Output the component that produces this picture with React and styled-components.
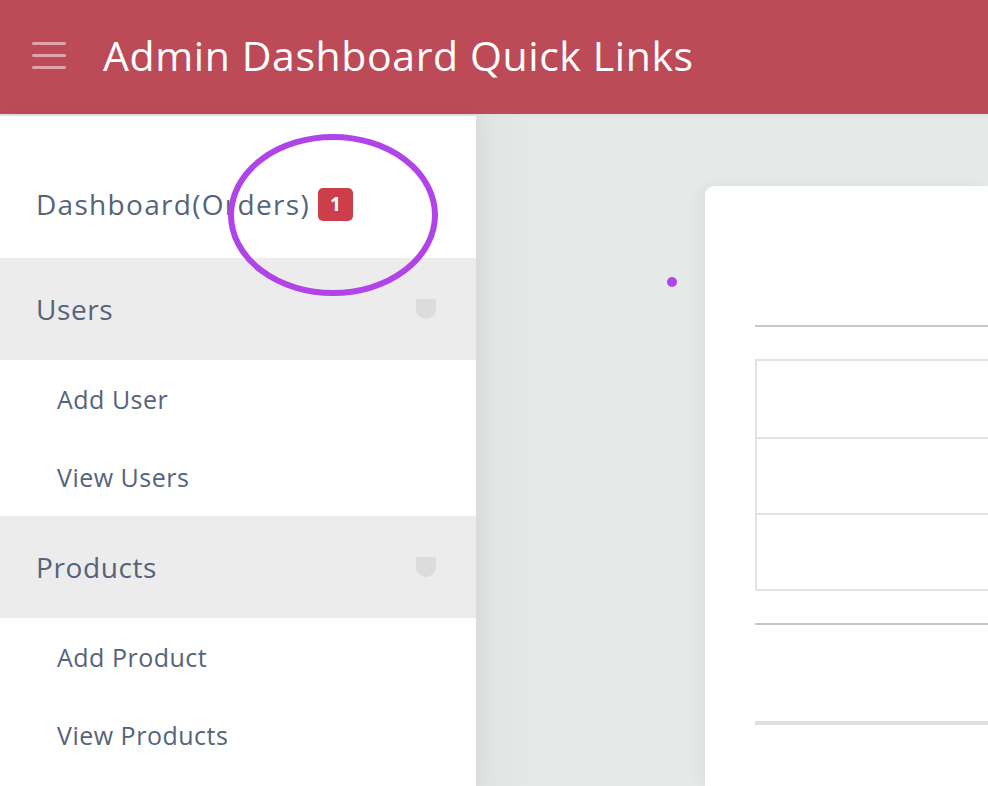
import React from "react";
import styled, { createGlobalStyle } from "styled-components";

const Global = createGlobalStyle`
  html, body { margin: 0; padding: 0; }
  body { font-family: "Open Sans", "Noto Sans", sans-serif; background: #e5eae9; overflow: hidden; }
  * { box-sizing: border-box; }
`;

const Page = styled.div`
  position: relative;
  width: 988px;
  height: 786px;
  display: flex;
  flex-direction: column;
  overflow: hidden;
`;

const Header = styled.header`
  height: 116px;
  flex: none;
  background: #bd4a57;
  border-bottom: 2px solid #e2e2e2;
  display: flex;
  align-items: center;
  padding-left: 32px;
  gap: 37px;
  padding-bottom: 4px;
`;

const Burger = styled.div`
  width: 34px;
  display: flex;
  flex-direction: column;
  gap: 9px;
  span {
    display: block;
    height: 3px;
    border-radius: 2px;
    background: #e0a3ab;
  }
`;

const Title = styled.h1`
  margin: 0;
  color: #fff;
  font-weight: 400;
  font-size: 41px;
  letter-spacing: 0.6px;
`;

const Body = styled.div`
  flex: 1;
  display: flex;
  min-height: 0;
`;

const Sidebar = styled.nav`
  width: 476px;
  flex: none;
  background: #fff;
  display: flex;
  flex-direction: column;
  position: relative;
  z-index: 1;
  box-shadow: 4px 0 14px rgba(0, 0, 0, 0.05);
`;

const Item = styled.div`
  height: ${(p) => p.$h}px;
  flex: none;
  display: flex;
  align-items: center;
  justify-content: space-between;
  padding: ${(p) => (p.$sub ? "0 0 0 57px" : "0 40px 0 36px")};
  padding-top: ${(p) => p.$pt || 0}px;
  background: ${(p) => (p.$group ? "#ececec" : "#fff")};
  color: #56637a;
  font-size: ${(p) => (p.$sub ? 25 : 28)}px;
  letter-spacing: ${(p) => (p.$sub ? 0.5 : 0.6)}px;
`;

const Label = styled.span`
  display: inline-flex;
  align-items: center;
  gap: 8px;
  letter-spacing: 1.3px;
`;

const Badge = styled.span`
  display: inline-flex;
  align-items: center;
  justify-content: center;
  width: 35px;
  height: 33px;
  border-radius: 5px;
  background: #cc3f4a;
  color: #fff;
  font-weight: 700;
  font-size: 19px;
  letter-spacing: 0;
  font-family: "Noto Sans", sans-serif;
`;

const Caret = styled.span`
  width: 20px;
  height: 20px;
  background: #dcdcdc;
  border-radius: 2px 2px 10px 10px;
`;

const Main = styled.main`
  flex: 1;
  background: linear-gradient(90deg, #dfe4e3 0, #e5eae9 60px);
  padding: 70px 0 0 229px;
  min-width: 0;
`;

const Card = styled.section`
  width: 100%;
  height: 100%;
  background: #fff;
  border-radius: 9px 0 0 0;
  box-shadow: -6px 0 14px rgba(0, 0, 0, 0.04);
  padding: 139px 0 0 50px;
  display: flex;
  flex-direction: column;
`;

const Rule = styled.div`
  height: ${(p) => p.$t}px;
  background: ${(p) => p.$c};
  margin-bottom: ${(p) => p.$mb}px;
  flex: none;
`;

const Table = styled.div`
  border: 2px solid #e0e2e6;
  border-right: none;
  display: flex;
  flex-direction: column;
  margin-bottom: 32px;
`;

const Row = styled.div`
  height: 76px;
  & + & { border-top: 2px solid #e0e2e6; }
`;

const Annotation = styled.svg`
  position: absolute;
  left: 0;
  top: 0;
  pointer-events: none;
  z-index: 5;
`;

export default function App() {
  return (
    <Page>
      <Global />
      <Header>
        <Burger>
          <span />
          <span />
          <span />
        </Burger>
        <Title>Admin Dashboard Quick Links</Title>
      </Header>
      <Body>
        <Sidebar>
          <Item $h={142} $pt={34}>
            <Label>
              Dashboard(Orders) <Badge>1</Badge>
            </Label>
          </Item>
          <Item $h={102} $group>
            <span>Users</span>
            <Caret />
          </Item>
          <Item $h={78} $sub>Add User</Item>
          <Item $h={78} $sub>View Users</Item>
          <Item $h={102} $group>
            <span>Products</span>
            <Caret />
          </Item>
          <Item $h={78} $sub>Add Product</Item>
          <Item $h={78} $sub>View Products</Item>
        </Sidebar>
        <Main>
          <Card>
            <Rule $t={2} $c="#c8c8c8" $mb={32} />
            <Table>
              <Row />
              <Row />
              <Row />
            </Table>
            <Rule $t={2} $c="#c6c6c6" $mb={96} />
            <Rule $t={4} $c="#dfe0e4" $mb={0} />
          </Card>
        </Main>
      </Body>
      <Annotation width="988" height="786" viewBox="0 0 988 786">
        <ellipse cx="333" cy="215" rx="102" ry="78" fill="none" stroke="#b044e8" strokeWidth="6" />
        <circle cx="672" cy="282" r="5" fill="#b044e8" />
      </Annotation>
    </Page>
  );
}
